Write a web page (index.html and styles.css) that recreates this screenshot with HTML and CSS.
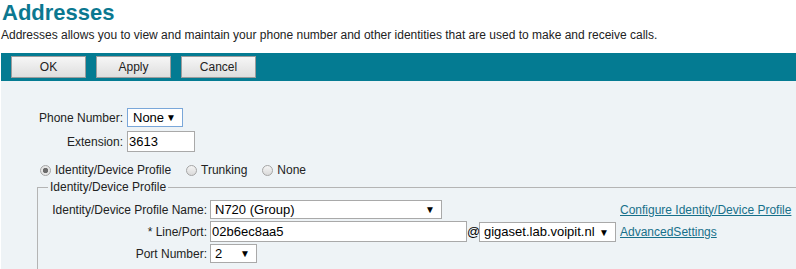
FILE: index.html
```html
<!DOCTYPE html>
<html lang="en">
<head>
    <meta charset="UTF-8">
    <title>Addresses</title>
    <link rel="stylesheet" href="styles.css">
</head>
<body>
    <h1 class="page-title">Addresses</h1>
    <p class="page-desc">Addresses allows you to view and maintain your phone number and other identities that are used to make and receive calls.</p>

    <div class="toolbar">
        <button class="tb-btn">OK</button>
        <button class="tb-btn">Apply</button>
        <button class="tb-btn">Cancel</button>
    </div>

    <div class="content">
        <div class="number-grid">
            <label class="field-label" for="phoneNumber">Phone Number:</label>
            <span class="sel sel-phone is-focused">
                <select id="phoneNumber"><option>None</option></select>
            </span>
            <label class="field-label" for="extension">Extension:</label>
            <input type="text" id="extension" class="text-input ext-input" value="3613">
        </div>

        <div class="radio-row">
            <label class="radio-item"><input type="radio" name="mode" checked>Identity/Device Profile</label>
            <label class="radio-item"><input type="radio" name="mode">Trunking</label>
            <label class="radio-item"><input type="radio" name="mode">None</label>
        </div>

        <fieldset class="profile-box">
            <legend>Identity/Device Profile</legend>
            <div class="profile-grid">
                <label class="field-label" for="profileName">Identity/Device Profile Name:</label>
                <span class="sel sel-name">
                    <select id="profileName"><option>N720 (Group)</option></select>
                </span>
                <a href="#" class="side-link">Configure Identity/Device Profile</a>

                <label class="field-label" for="linePort">* Line/Port:</label>
                <div class="line-port">
                    <input type="text" id="linePort" class="text-input port-input" value="02b6ec8aa5">
                    <span class="at-sign">@</span>
                    <span class="sel sel-domain">
                        <select><option>gigaset.lab.voipit.nl</option></select>
                    </span>
                </div>
                <a href="#" class="side-link">AdvancedSettings</a>

                <label class="field-label" for="portNumber">Port Number:</label>
                <span class="sel sel-port">
                    <select id="portNumber"><option>2</option></select>
                </span>
                <span></span>
            </div>
        </fieldset>
    </div>
</body>
</html>
```

FILE: styles.css
```css
body {
    margin: 0 0 0 1px;
    font-family: "Liberation Sans", Arial, sans-serif;
    font-size: 12px;
    color: #222;
    background: #fff;
}
.page-title {
    margin: 0;
    padding-left: 1px;
    font-size: 22px;
    line-height: 25px;
    color: #0b7890;
}
.page-desc {
    margin: 3px 0 0;
    line-height: 14px;
}
.toolbar {
    display: flex;
    gap: 10px;
    margin-top: 11px;
    height: 28px;
    padding: 3px 0 0 10px;
    box-sizing: border-box;
    background-color: #047b92;
}
.tb-btn {
    width: 75px;
    height: 22px;
    padding: 0;
    font-family: inherit;
    font-size: 12px;
    color: #222;
    border: 1px solid #9c9c9c;
    background: linear-gradient(#f6f6f6, #dedede);
}
.content {
    background-color: #eef3f6;
    padding: 27px 0 0 29px;
    height: 188px;
    box-sizing: border-box;
    overflow: hidden;
}
.number-grid {
    display: grid;
    grid-template-columns: 93px auto;
    column-gap: 4px;
    row-gap: 4px;
    align-items: center;
    justify-items: start;
}
.field-label {
    justify-self: end;
    white-space: nowrap;
}

/* select box with a drawn arrow */
.sel {
    position: relative;
    display: inline-block;
    height: 19px;
    box-sizing: border-box;
    border: 1px solid #a9a9a9;
    background: #fff;
}
.sel.is-focused {
    border-color: #7aa7d9;
}
.sel select {
    appearance: none;
    -webkit-appearance: none;
    width: 100%;
    height: 100%;
    border: none;
    background: transparent;
    padding: 0 0 0 4px;
    margin: 0;
    font-family: inherit;
    font-size: 13px;
    color: #000;
    outline: none;
}
.sel::after {
    content: "\25BC";
    position: absolute;
    right: 6px;
    top: 3px;
    font-size: 10px;
    line-height: 11px;
    color: #000;
    pointer-events: none;
}
.sel-phone { width: 56px; }
.sel-phone select { padding-left: 5px; }
.sel-name { width: 232px; }
.sel-domain { width: 137px; height: 20px; }
.sel-domain::after { top: 4px; }
.sel-port { width: 47px; }

.text-input {
    height: 21px;
    box-sizing: border-box;
    border: 1px solid #a9a9a9;
    padding: 0 1px;
    margin: 0;
    font-family: inherit;
    font-size: 13px;
    color: #000;
    background: #fff;
}
.ext-input { width: 68px; }
.port-input { width: 257px; }

.radio-row {
    display: flex;
    margin: 11px 0 0 10px;
    line-height: 14px;
}
.radio-item {
    display: flex;
    align-items: center;
    margin-right: 15px;
}
.radio-item input {
    appearance: none;
    -webkit-appearance: none;
    width: 11px;
    height: 11px;
    margin: 0 4px 0 0;
    border: 1px solid #a5a5a5;
    border-radius: 50%;
    background: linear-gradient(#f4f4f4, #dadada);
}
.radio-item input:checked {
    background: radial-gradient(circle, #6c6c6c 0 2.4px, #e6e6e6 3px);
}

.profile-box {
    margin: 3px -40px 0 7px;
    padding: 6px 0 20px 0;
    border: 1px solid #b4b4b4;
}
.profile-box legend {
    margin-left: 10px;
    padding: 0 2px;
    line-height: 14px;
}
.profile-grid {
    display: grid;
    grid-template-columns: 169px auto 1fr;
    column-gap: 3px;
    row-gap: 2px;
    align-items: center;
    justify-items: start;
}
.line-port {
    display: flex;
    align-items: center;
}
.at-sign {
    width: 12px;
    font-size: 13px;
    color: #000;
}
.side-link {
    margin-left: 1px;
    color: #17708a;
    white-space: nowrap;
}
```
